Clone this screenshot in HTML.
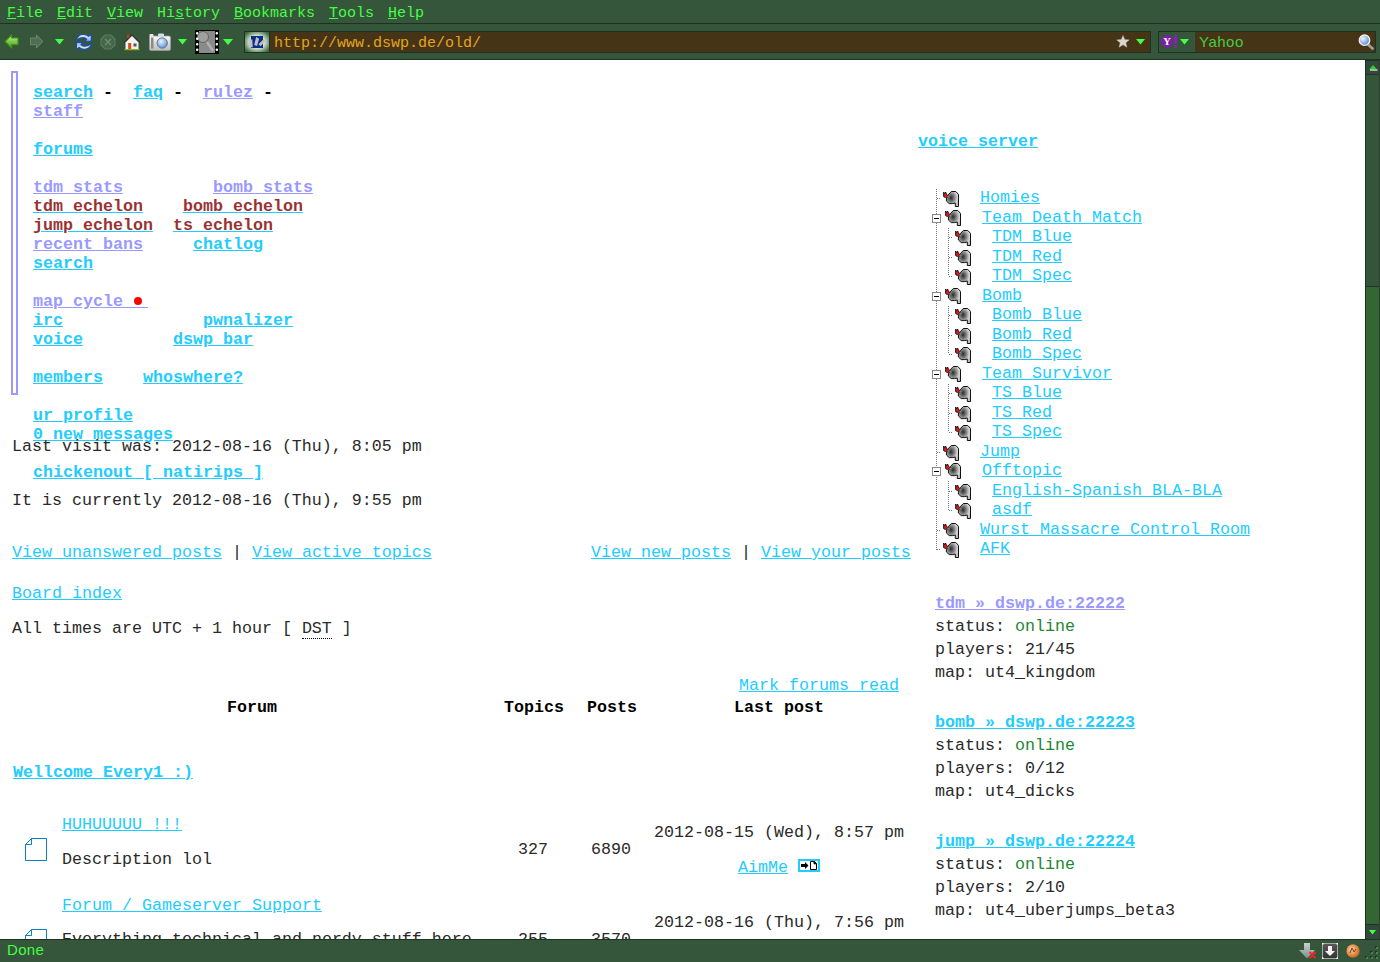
<!DOCTYPE html><html><head><meta charset="utf-8"><style>
*{margin:0;padding:0;box-sizing:border-box}
html,body{width:1380px;height:962px;overflow:hidden;background:#fff;font-family:"Liberation Mono",monospace}
.chrome{position:absolute;left:0;background:#35563a}
.t{position:absolute;white-space:pre;font-size:16.667px;line-height:20px;color:#2a2a2a}
.t.b{color:#000}
.t a{text-decoration:underline}
.b{font-weight:bold}
.menu{position:absolute;top:4px;height:20px;font-size:15px;line-height:20px;color:#44ff44;white-space:pre}
.ab{position:absolute}
</style></head><body>

<div class="chrome" style="top:0;width:1380px;height:60px"></div>
<div class="ab" style="left:0;top:23px;width:1380px;height:1px;background:#1e3221"></div>
<div class="ab" style="left:0;top:59px;width:1380px;height:1px;background:#1e3221"></div>
<div class="menu" style="left:7px">File</div>
<div class="ab" style="left:7px;top:18px;width:9px;height:1px;background:#44ff44"></div>
<div class="menu" style="left:57px">Edit</div>
<div class="ab" style="left:57px;top:18px;width:9px;height:1px;background:#44ff44"></div>
<div class="menu" style="left:107px">View</div>
<div class="ab" style="left:107px;top:18px;width:9px;height:1px;background:#44ff44"></div>
<div class="menu" style="left:157px">History</div>
<div class="ab" style="left:175px;top:18px;width:9px;height:1px;background:#44ff44"></div>
<div class="menu" style="left:234px">Bookmarks</div>
<div class="ab" style="left:234px;top:18px;width:9px;height:1px;background:#44ff44"></div>
<div class="menu" style="left:329px">Tools</div>
<div class="ab" style="left:329px;top:18px;width:9px;height:1px;background:#44ff44"></div>
<div class="menu" style="left:388px">Help</div>
<div class="ab" style="left:388px;top:18px;width:9px;height:1px;background:#44ff44"></div>
<div class="ab" style="left:244px;top:31px;width:907px;height:22px;background:#463417;border:1px solid #1e3221"></div>
<div class="ab" style="left:245px;top:32px;width:24px;height:20px;background:#3e6a44"></div>
<div class="ab" style="left:269px;top:32px;width:1px;height:20px;background:#22342a"></div>
<div class="ab" style="left:274px;top:33px;height:22px;font-size:15px;line-height:22px;color:#e6a41c;white-space:pre">http://www.dswp.de/old/</div>
<div class="ab" style="left:1158px;top:31px;width:218px;height:22px;background:#463417;border:1px solid #1e3221"></div>
<div class="ab" style="left:1159px;top:32px;width:36px;height:20px;background:#35563a"></div>
<div class="ab" style="left:1199px;top:31px;height:22px;font-family:'Liberation Sans',sans-serif;font-size:15px;line-height:22px;color:#44cc44;white-space:pre;letter-spacing:0.5px">Yahoo</div>
<div class="ab" style="left:1365px;top:60px;width:15px;height:880px;background:#1c361e"></div>
<div class="ab" style="left:1366px;top:61px;width:13px;height:878px;background:#336633"></div>
<div class="ab" style="left:1379px;top:60px;width:1px;height:880px;background:#2b3f2c"></div>
<div class="chrome" style="top:939px;width:1380px;height:23px"></div>
<div class="ab" style="left:0;top:939px;width:1380px;height:1px;background:#1e3221"></div>
<div class="ab" style="left:7px;top:938px;height:23px;font-family:'Liberation Sans',sans-serif;font-size:15px;line-height:23px;color:#44ff44;letter-spacing:0.3px">Done</div>
<svg class="ab" style="left:4px;top:34px;" width="16" height="16" viewBox="0 0 16 16"><defs><linearGradient id="gb" x1="0" y1="0" x2="0" y2="1"><stop offset="0" stop-color="#c8f0a0"/><stop offset="1" stop-color="#3c9a10"/></linearGradient></defs><path d="M1.2,7.4 L7.6,1 L7.6,4 L14,4 L14,10.6 L7.6,10.6 L7.6,14 Z" fill="url(#gb)" stroke="#3a9a08" stroke-width="1.2" stroke-linejoin="round"/></svg>
<svg class="ab" style="left:29px;top:34px;" width="16" height="16" viewBox="0 0 16 16"><path d="M13.6,7.4 L7.4,1.2 L7.4,4 L1.5,4 L1.5,10.7 L7.4,10.7 L7.4,13.8 Z" fill="#4f6e52" stroke="#66856a" stroke-width="1.1" stroke-linejoin="round"/></svg>
<svg class="ab" style="left:55px;top:38.7px;" width="9" height="6.4" viewBox="0 0 9 6.4"><path d="M0,0 L9,0 L4.5,5.4 Z" fill="#44ff44"/></svg>
<svg class="ab" style="left:178px;top:38.7px;" width="9" height="6.4" viewBox="0 0 9 6.4"><path d="M0,0 L9,0 L4.5,5.4 Z" fill="#44ff44"/></svg>
<svg class="ab" style="left:223px;top:38.9px;" width="10" height="7" viewBox="0 0 10 7"><path d="M0,0 L10,0 L5.0,6 Z" fill="#44ff44"/></svg>
<svg class="ab" style="left:1136px;top:38.9px;" width="9" height="6.4" viewBox="0 0 9 6.4"><path d="M0,0 L9,0 L4.5,5.4 Z" fill="#44ff44"/></svg>
<svg class="ab" style="left:1180px;top:38.9px;" width="9" height="6.4" viewBox="0 0 9 6.4"><path d="M0,0 L9,0 L4.5,5.4 Z" fill="#44ff44"/></svg>
<svg class="ab" style="left:74px;top:32px;" width="20" height="20" viewBox="0 0 20 20"><defs><linearGradient id="gr" x1="0" y1="0" x2="0" y2="1"><stop offset="0" stop-color="#eef4ff"/><stop offset="1" stop-color="#88ace0"/></linearGradient></defs><path d="M2.4,8.6 C3,3.8 6.5,2.3 9.5,2.3 C11.8,2.3 13.3,3 14.6,4.2 L17.3,2.4 L17.3,9.4 L10.6,9.4 L12.6,7.3 C11.6,6.3 10.6,5.6 9,5.6 C6.6,5.6 4.6,6.6 2.4,8.6 Z" fill="url(#gr)" stroke="#1f4f9f" stroke-width="1.3" stroke-linejoin="miter"/><g transform="rotate(180 9.85 9.9)"><path d="M2.4,8.6 C3,3.8 6.5,2.3 9.5,2.3 C11.8,2.3 13.3,3 14.6,4.2 L17.3,2.4 L17.3,9.4 L10.6,9.4 L12.6,7.3 C11.6,6.3 10.6,5.6 9,5.6 C6.6,5.6 4.6,6.6 2.4,8.6 Z" fill="url(#gr)" stroke="#1f4f9f" stroke-width="1.3" stroke-linejoin="miter"/></g></svg>
<svg class="ab" style="left:100px;top:34px;" width="16" height="16" viewBox="0 0 16 16"><path d="M5,1 L11,1 L15,5 L15,11 L11,15 L5,15 L1,11 L1,5 Z" fill="#456648" stroke="#5c7d60" stroke-width="1.1"/><path d="M5,5 L11,11 M11,5 L5,11" stroke="#6e8f72" stroke-width="1.4"/></svg>
<svg class="ab" style="left:123px;top:33px;" width="18" height="18" viewBox="0 0 18 18"><rect x="2.5" y="9" width="13" height="7" fill="#f2f2f0"/><path d="M1,10 L9,2 L17,10" fill="#f2f2f0" stroke="#333" stroke-width="1.3"/><rect x="4" y="1.8" width="2.2" height="3" fill="#d03a10"/><rect x="5.2" y="10" width="3" height="6" fill="#d84a10"/><rect x="10.5" y="10.5" width="3" height="3" fill="#555"/><rect x="1.5" y="16" width="15" height="1.2" fill="#8ab820"/></svg>
<svg class="ab" style="left:148px;top:32px;" width="24" height="20" viewBox="0 0 24 20"><defs><linearGradient id="gc" x1="0" y1="0" x2="0" y2="1"><stop offset="0" stop-color="#fafafa"/><stop offset="1" stop-color="#bdbdbd"/></linearGradient><radialGradient id="gl" cx="0.4" cy="0.35" r="0.7"><stop offset="0" stop-color="#e8f4ff"/><stop offset="1" stop-color="#4f8fd8"/></radialGradient></defs><rect x="1.5" y="4" width="21" height="14.5" rx="1.5" fill="url(#gc)" stroke="#9a9a9a" stroke-width="0.8"/><rect x="1.5" y="2" width="4" height="3" rx="1" fill="#e8e8e8"/><rect x="10" y="1.5" width="6" height="3" rx="1" fill="#cfe0f0"/><rect x="3" y="5.5" width="2.5" height="11" fill="#8a8a8a"/><circle cx="14.2" cy="11" r="5.2" fill="url(#gl)" stroke="#6f6f6f" stroke-width="0.9"/></svg>
<svg class="ab" style="left:195px;top:30px;" width="24" height="24" viewBox="0 0 24 24"><rect x="0" y="0" width="24" height="24" fill="#000"/><rect x="4" y="1" width="16" height="22" fill="#8a8a8a"/><circle cx="8" cy="7" r="5.5" fill="#a0a0a0" stroke="#666" stroke-width="1"/><path d="M12,12 L18,21" stroke="#b0b0b0" stroke-width="2.5"/><rect x="1" y="2" width="2.4" height="2.6" rx="1" fill="#fff"/><rect x="20.6" y="2" width="2.4" height="2.6" rx="1" fill="#fff"/><rect x="1" y="7.5" width="2.4" height="2.6" rx="1" fill="#fff"/><rect x="20.6" y="7.5" width="2.4" height="2.6" rx="1" fill="#fff"/><rect x="1" y="13" width="2.4" height="2.6" rx="1" fill="#fff"/><rect x="20.6" y="13" width="2.4" height="2.6" rx="1" fill="#fff"/><rect x="1" y="18.5" width="2.4" height="2.6" rx="1" fill="#fff"/><rect x="20.6" y="18.5" width="2.4" height="2.6" rx="1" fill="#fff"/></svg>
<svg class="ab" style="left:245px;top:32px;" width="24" height="20" viewBox="0 0 24 20"><defs><radialGradient id="gf" cx="0.5" cy="0.5" r="0.62"><stop offset="0.5" stop-color="#d8e4d0"/><stop offset="1" stop-color="#3e6a44"/></radialGradient></defs><rect x="0" y="0" width="24" height="20" fill="url(#gf)"/><rect x="6" y="4" width="12" height="12" fill="#0a2f8a"/><path d="M4,7.5 L7.3,7.5 L7.8,15.2 L4.5,15.2 Z" fill="#c0c0c0"/><path d="M11.2,5 L14.2,6.8 L12,13.9 L9.2,13 Z" fill="#c0c0c0"/><path d="M18.5,7.2 L20.5,9.2 L15.5,14.2 L13.5,12.2 Z" fill="#c0c0c0"/></svg>
<svg class="ab" style="left:1116px;top:35px;" width="14" height="13" viewBox="0 0 14 13"><path d="M7,0.5 L8.7,4.6 L13.2,4.9 L9.8,7.8 L10.9,12.2 L7,9.8 L3.1,12.2 L4.2,7.8 L0.8,4.9 L5.3,4.6 Z" fill="#dcd7cf" stroke="#bfb8ad" stroke-width="0.5"/></svg>
<svg class="ab" style="left:1160px;top:34px;" width="20" height="15" viewBox="0 0 20 15"><circle cx="7" cy="7.3" r="6.3" fill="#7b1fa2"/><text x="7" y="11.3" font-family="Liberation Serif" font-weight="bold" font-size="10.5" fill="#fff" text-anchor="middle">Y</text><rect x="14.3" y="1" width="2.6" height="8.5" fill="#8a22c0"/><rect x="14.3" y="11" width="2.6" height="2.6" fill="#8a22c0"/></svg>
<svg class="ab" style="left:1357px;top:33px;" width="18" height="18" viewBox="0 0 18 18"><defs><radialGradient id="gm" cx="0.35" cy="0.35" r="0.7"><stop offset="0" stop-color="#f0f6ff"/><stop offset="1" stop-color="#4f86d0"/></radialGradient></defs><path d="M10.5,11 L15.5,15.5" stroke="#9aa0a0" stroke-width="2.8" stroke-linecap="round"/><circle cx="7.5" cy="7.2" r="5.2" fill="url(#gm)" stroke="#f4f0ea" stroke-width="1.4"/></svg>
<div class="ab" style="left:1366px;top:61px;width:13px;height:13px;background:#32483a"></div>
<div class="ab" style="left:1366px;top:74px;width:13px;height:1px;background:#22352a"></div>
<div class="ab" style="left:1366px;top:75px;width:13px;height:211px;background:#35553a"></div>
<div class="ab" style="left:1366px;top:286px;width:13px;height:1px;background:#22352a"></div>
<svg class="ab" style="left:1369px;top:64.5px;" width="9" height="6" viewBox="0 0 9 6"><path d="M0,4.5 L8,4.5 L4,0 Z" fill="#33cc33"/><rect x="1" y="4.5" width="7.5" height="1.1" fill="#f0fff0"/></svg>
<div class="ab" style="left:1366px;top:924px;width:13px;height:1px;background:#1e3221"></div>
<div class="ab" style="left:1366px;top:925px;width:13px;height:14px;background:#32483a"></div>
<svg class="ab" style="left:1369px;top:929.5px;" width="8" height="5" viewBox="0 0 8 5"><path d="M0,0 L7,0 L3.5,4.5 Z" fill="#44ff44"/></svg>
<svg class="ab" style="left:1299px;top:942px;" width="18" height="18" viewBox="0 0 18 18"><defs><linearGradient id="gd" x1="0" y1="0" x2="0" y2="1"><stop offset="0" stop-color="#c8d0cc"/><stop offset="1" stop-color="#7a8f88"/></linearGradient></defs><path d="M5,1 L11,1 L11,8 L16,8 L8,16.5 L0,8 L5,8 Z" fill="url(#gd)"/><path d="M11,10.5 L16,15.5 M16,10.5 L11,15.5" stroke="#ff2020" stroke-width="1.8" stroke-linecap="round"/></svg>
<svg class="ab" style="left:1322px;top:943px;" width="16" height="16" viewBox="0 0 16 16"><defs><linearGradient id="gdb" x1="0" y1="0" x2="0" y2="1"><stop offset="0" stop-color="#5a5a5a"/><stop offset="1" stop-color="#333"/></linearGradient></defs><rect x="0.5" y="0.5" width="15" height="15" fill="url(#gdb)" stroke="#a8a8a8" stroke-width="1"/><rect x="0" y="0" width="1.5" height="1.5" fill="#fff"/><rect x="14.5" y="0" width="1.5" height="1.5" fill="#fff"/><rect x="0" y="14.5" width="1.5" height="1.5" fill="#fff"/><rect x="14.5" y="14.5" width="1.5" height="1.5" fill="#fff"/><path d="M6,3 L10,3 L10,8 L13,8 L8,13 L3,8 L6,8 Z" fill="#f4f4f4"/></svg>
<svg class="ab" style="left:1345px;top:943px;" width="16" height="16" viewBox="0 0 16 16"><defs><radialGradient id="gg" cx="0.4" cy="0.4" r="0.6"><stop offset="0" stop-color="#f8d8a0"/><stop offset="1" stop-color="#c86a20"/></radialGradient></defs><circle cx="8" cy="8" r="6.7" fill="url(#gg)"/><path d="M5,10 L7,5 L9,9 L11,6" stroke="#9a2a20" stroke-width="1" fill="none"/></svg>
<div class="ab" style="left:1375px;top:946px;width:2px;height:2px;background:#1e3221"></div><div class="ab" style="left:1376px;top:947px;width:2px;height:2px;background:#3f8a45"></div>
<div class="ab" style="left:1370px;top:951px;width:2px;height:2px;background:#1e3221"></div><div class="ab" style="left:1371px;top:952px;width:2px;height:2px;background:#3f8a45"></div>
<div class="ab" style="left:1375px;top:951px;width:2px;height:2px;background:#1e3221"></div><div class="ab" style="left:1376px;top:952px;width:2px;height:2px;background:#3f8a45"></div>
<div class="ab" style="left:1365px;top:956px;width:2px;height:2px;background:#1e3221"></div><div class="ab" style="left:1366px;top:957px;width:2px;height:2px;background:#3f8a45"></div>
<div class="ab" style="left:1370px;top:956px;width:2px;height:2px;background:#1e3221"></div><div class="ab" style="left:1371px;top:957px;width:2px;height:2px;background:#3f8a45"></div>
<div class="ab" style="left:1375px;top:956px;width:2px;height:2px;background:#1e3221"></div><div class="ab" style="left:1376px;top:957px;width:2px;height:2px;background:#3f8a45"></div>
<div id="content" style="position:absolute;left:0;top:60px;width:1365px;height:879px;overflow:hidden">
<div class="ab" style="left:11px;top:11px;width:7px;height:324px;border:2px solid #9999ff"></div>
<div class="t b" style="left:33px;top:23.0px;"><a style="color:#22ccff;">search</a> -  <a style="color:#22ccff;">faq</a> -  <a style="color:#9999ff;">rulez</a> -</div>
<div class="t b" style="left:33px;top:42.0px;"><a style="color:#9999ff;">staff</a></div>
<div class="t b" style="left:33px;top:80.0px;"><a style="color:#22ccff;">forums</a></div>
<div class="t b" style="left:33px;top:118.0px;"><a style="color:#9999ff;">tdm stats</a>         <a style="color:#9999ff;">bomb stats</a></div>
<div class="t b" style="left:33px;top:137.0px;"><a style="color:#22ccff;"><span style="color:#993333">tdm echelon</span></a>    <a style="color:#22ccff;"><span style="color:#993333">bomb echelon</span></a></div>
<div class="t b" style="left:33px;top:156.0px;"><a style="color:#22ccff;"><span style="color:#993333">jump echelon</span></a>  <a style="color:#22ccff;"><span style="color:#993333">ts echelon</span></a></div>
<div class="t b" style="left:33px;top:175.0px;"><a style="color:#9999ff;">recent bans</a>     <a style="color:#22ccff;">chatlog</a></div>
<div class="t b" style="left:33px;top:194.0px;"><a style="color:#22ccff;">search</a></div>
<div class="t b" style="left:33px;top:232.0px;"><a style="color:#9999ff;">map cycle <span style="letter-spacing:5px;position:relative"> <b style="position:absolute;left:1px;top:5px;width:8px;height:8px;border-radius:50%;background:#f00"></b></span></a></div>
<div class="t b" style="left:33px;top:251.0px;"><a style="color:#22ccff;">irc</a>              <a style="color:#22ccff;">pwnalizer</a></div>
<div class="t b" style="left:33px;top:270.0px;"><a style="color:#22ccff;">voice</a>         <a style="color:#22ccff;">dswp bar</a></div>
<div class="t b" style="left:33px;top:308.0px;"><a style="color:#22ccff;">members</a>    <a style="color:#22ccff;">whoswhere?</a></div>
<div class="t b" style="left:33px;top:346.0px;"><a style="color:#22ccff;">ur profile</a></div>
<div class="t b" style="left:33px;top:365.0px;"><a style="color:#22ccff;">0 new messages</a></div>
<div class="t" style="left:12px;top:377.0px;">Last visit was: 2012-08-16 (Thu), 8:05 pm</div>
<div class="t b" style="left:33px;top:403.0px;"><a style="color:#22ccff;">chickenout [ natirips ]</a></div>
<div class="t" style="left:12px;top:431.0px;">It is currently 2012-08-16 (Thu), 9:55 pm</div>
<div class="t" style="left:12px;top:483.0px;"><a style="color:#22ccff;">View unanswered posts</a> | <a style="color:#22ccff;">View active topics</a></div>
<div class="t" style="left:591px;top:483.0px;"><a style="color:#22ccff;">View new posts</a> | <a style="color:#22ccff;">View your posts</a></div>
<div class="t" style="left:12px;top:524.0px;"><a style="color:#22ccff;">Board index</a></div>
<div class="t" style="left:12px;top:559.0px;">All times are UTC + 1 hour [ <span style="border-bottom:1px dotted #000">DST</span> ]</div>
<div class="t" style="left:739px;top:616.0px;"><a style="color:#22ccff;">Mark forums read</a></div>
<div class="t b" style="left:227px;top:638.0px;">Forum</div>
<div class="t b" style="left:504px;top:638.0px;">Topics</div>
<div class="t b" style="left:587px;top:638.0px;">Posts</div>
<div class="t b" style="left:734px;top:638.0px;">Last post</div>
<div class="t b" style="left:13px;top:703.0px;"><a style="color:#22ccff;">Wellcome Every1 :)</a></div>
<div class="t" style="left:62px;top:755.0px;"><a style="color:#22ccff;">HUHUUUUU !!!</a></div>
<div class="t" style="left:62px;top:790.0px;">Description lol</div>
<div class="t" style="left:518px;top:780.0px;">327</div>
<div class="t" style="left:591px;top:780.0px;">6890</div>
<div class="t" style="left:654px;top:763.0px;">2012-08-15 (Wed), 8:57 pm</div>
<div class="t" style="left:738px;top:798.0px;"><a style="color:#22ccff;">AimMe</a></div>
<div class="t" style="left:62px;top:836.0px;"><a style="color:#22ccff;">Forum / Gameserver Support</a></div>
<div class="t" style="left:62px;top:870.0px;">Everything technical and nerdy stuff here</div>
<div class="t" style="left:518px;top:870.0px;">255</div>
<div class="t" style="left:591px;top:870.0px;">3570</div>
<div class="t" style="left:654px;top:853.0px;">2012-08-16 (Thu), 7:56 pm</div>
<svg class="ab" style="left:25px;top:778px" width="23" height="23" viewBox="0 0 23 23"><path d="M6.5,0.5 L21.5,0.5 L21.5,22.5 L0.5,22.5 L0.5,6.5 Z M0.5,6.5 L6.5,6.5 L6.5,0.5" fill="none" stroke="#0a80c0" stroke-width="1"/></svg>
<svg class="ab" style="left:25px;top:869px" width="23" height="23" viewBox="0 0 23 23"><path d="M6.5,0.5 L21.5,0.5 L21.5,22.5 L0.5,22.5 L0.5,6.5 Z M0.5,6.5 L6.5,6.5 L6.5,0.5" fill="none" stroke="#0a80c0" stroke-width="1"/></svg>
<svg class="ab" style="left:798px;top:799px" width="22" height="13" viewBox="0 0 22 13"><rect x="1" y="1" width="20" height="11" fill="#fff" stroke="#22ccff" stroke-width="2"/><path d="M3,5 L7,5 L7,3 L10.5,6.5 L7,10 L7,8 L3,8 Z" fill="#000"/><path d="M12.5,2.5 L16.5,2.5 L18.5,4.5 L18.5,10.5 L12.5,10.5 Z" fill="#fff" stroke="#000" stroke-width="1"/><path d="M16,2.5 L16,4.8 L18.5,4.8" fill="#000" stroke="#000" stroke-width="1"/></svg>
<div class="t b" style="left:918px;top:72.0px;"><a style="color:#22ccff;">voice server</a></div>
<div class="t" style="left:980px;top:128.0px;"><a style="color:#22ccff;">Homies</a></div>
<div class="t" style="left:982px;top:148.0px;"><a style="color:#22ccff;">Team Death Match</a></div>
<div class="t" style="left:992px;top:167.0px;"><a style="color:#22ccff;">TDM Blue</a></div>
<div class="t" style="left:992px;top:187.0px;"><a style="color:#22ccff;">TDM Red</a></div>
<div class="t" style="left:992px;top:206.0px;"><a style="color:#22ccff;">TDM Spec</a></div>
<div class="t" style="left:982px;top:226.0px;"><a style="color:#22ccff;">Bomb</a></div>
<div class="t" style="left:992px;top:245.0px;"><a style="color:#22ccff;">Bomb Blue</a></div>
<div class="t" style="left:992px;top:265.0px;"><a style="color:#22ccff;">Bomb Red</a></div>
<div class="t" style="left:992px;top:284.0px;"><a style="color:#22ccff;">Bomb Spec</a></div>
<div class="t" style="left:982px;top:304.0px;"><a style="color:#22ccff;">Team Survivor</a></div>
<div class="t" style="left:992px;top:323.0px;"><a style="color:#22ccff;">TS Blue</a></div>
<div class="t" style="left:992px;top:343.0px;"><a style="color:#22ccff;">TS Red</a></div>
<div class="t" style="left:992px;top:362.0px;"><a style="color:#22ccff;">TS Spec</a></div>
<div class="t" style="left:980px;top:382.0px;"><a style="color:#22ccff;">Jump</a></div>
<div class="t" style="left:982px;top:401.0px;"><a style="color:#22ccff;">Offtopic</a></div>
<div class="t" style="left:992px;top:421.0px;"><a style="color:#22ccff;">English-Spanish BLA-BLA</a></div>
<div class="t" style="left:992px;top:440.0px;"><a style="color:#22ccff;">asdf</a></div>
<div class="t" style="left:980px;top:460.0px;"><a style="color:#22ccff;">Wurst Massacre Control Room</a></div>
<div class="t" style="left:980px;top:479.0px;"><a style="color:#22ccff;">AFK</a></div>
<svg width="0" height="0" style="position:absolute"><defs><radialGradient id="gs" cx="0.38" cy="0.42" r="0.62"><stop offset="0" stop-color="#2a2a2a"/><stop offset="0.5" stop-color="#8c8c8c"/><stop offset="0.85" stop-color="#d8d8d8"/><stop offset="1" stop-color="#bdbdbd"/></radialGradient></defs></svg>
<div class="ab" style="left:936px;top:129px;width:1px;height:361px;background:repeating-linear-gradient(to bottom,#777 0,#777 1px,transparent 1px,transparent 2px)"></div>
<div class="ab" style="left:937px;top:138px;width:4px;height:1px;background:repeating-linear-gradient(to right,#777 0,#777 1px,transparent 1px,transparent 2px)"></div>
<svg class="ab" style="left:943px;top:131px" width="16" height="16" viewBox="0 0 16 16"><path d="M8.3,0.5 L12.8,0.5 L15.5,3.4 L15.5,15.5 L12.3,15.5 L12.3,12 L9.8,12.6 L6.2,12.6 L3.4,10 L3.4,8 L5,3.9 Z" fill="url(#gs)" stroke="#111" stroke-width="1"/><path d="M0.6,1 L1.6,2.6 L2.6,1 L3.4,3 L4.8,4.8 L3.6,6.2 L2.4,6.6 L0.6,5.6 Z" fill="#ee1111" stroke="#111" stroke-width="0.9"/><path d="M4.2,5.2 L6.5,6" stroke="#8a8a8a" stroke-width="1"/></svg>
<div class="ab" style="left:932px;top:154px;width:9px;height:9px;border:1px solid #888;background:#fff"></div>
<div class="ab" style="left:934px;top:158px;width:5px;height:1px;background:#000"></div>
<svg class="ab" style="left:945px;top:150px" width="16" height="16" viewBox="0 0 16 16"><path d="M8.3,0.5 L12.8,0.5 L15.5,3.4 L15.5,15.5 L12.3,15.5 L12.3,12 L9.8,12.6 L6.2,12.6 L3.4,10 L3.4,8 L5,3.9 Z" fill="url(#gs)" stroke="#111" stroke-width="1"/><path d="M0.6,1 L1.6,2.6 L2.6,1 L3.4,3 L4.8,4.8 L3.6,6.2 L2.4,6.6 L0.6,5.6 Z" fill="#ee1111" stroke="#111" stroke-width="0.9"/><path d="M4.2,5.2 L6.5,6" stroke="#8a8a8a" stroke-width="1"/></svg>
<div class="ab" style="left:949px;top:177px;width:4px;height:1px;background:repeating-linear-gradient(to right,#777 0,#777 1px,transparent 1px,transparent 2px)"></div>
<svg class="ab" style="left:955px;top:170px" width="16" height="16" viewBox="0 0 16 16"><path d="M8.3,0.5 L12.8,0.5 L15.5,3.4 L15.5,15.5 L12.3,15.5 L12.3,12 L9.8,12.6 L6.2,12.6 L3.4,10 L3.4,8 L5,3.9 Z" fill="url(#gs)" stroke="#111" stroke-width="1"/><path d="M0.6,1 L1.6,2.6 L2.6,1 L3.4,3 L4.8,4.8 L3.6,6.2 L2.4,6.6 L0.6,5.6 Z" fill="#ee1111" stroke="#111" stroke-width="0.9"/><path d="M4.2,5.2 L6.5,6" stroke="#8a8a8a" stroke-width="1"/></svg>
<div class="ab" style="left:949px;top:197px;width:4px;height:1px;background:repeating-linear-gradient(to right,#777 0,#777 1px,transparent 1px,transparent 2px)"></div>
<svg class="ab" style="left:955px;top:190px" width="16" height="16" viewBox="0 0 16 16"><path d="M8.3,0.5 L12.8,0.5 L15.5,3.4 L15.5,15.5 L12.3,15.5 L12.3,12 L9.8,12.6 L6.2,12.6 L3.4,10 L3.4,8 L5,3.9 Z" fill="url(#gs)" stroke="#111" stroke-width="1"/><path d="M0.6,1 L1.6,2.6 L2.6,1 L3.4,3 L4.8,4.8 L3.6,6.2 L2.4,6.6 L0.6,5.6 Z" fill="#ee1111" stroke="#111" stroke-width="0.9"/><path d="M4.2,5.2 L6.5,6" stroke="#8a8a8a" stroke-width="1"/></svg>
<div class="ab" style="left:949px;top:216px;width:4px;height:1px;background:repeating-linear-gradient(to right,#777 0,#777 1px,transparent 1px,transparent 2px)"></div>
<svg class="ab" style="left:955px;top:209px" width="16" height="16" viewBox="0 0 16 16"><path d="M8.3,0.5 L12.8,0.5 L15.5,3.4 L15.5,15.5 L12.3,15.5 L12.3,12 L9.8,12.6 L6.2,12.6 L3.4,10 L3.4,8 L5,3.9 Z" fill="url(#gs)" stroke="#111" stroke-width="1"/><path d="M0.6,1 L1.6,2.6 L2.6,1 L3.4,3 L4.8,4.8 L3.6,6.2 L2.4,6.6 L0.6,5.6 Z" fill="#ee1111" stroke="#111" stroke-width="0.9"/><path d="M4.2,5.2 L6.5,6" stroke="#8a8a8a" stroke-width="1"/></svg>
<div class="ab" style="left:932px;top:232px;width:9px;height:9px;border:1px solid #888;background:#fff"></div>
<div class="ab" style="left:934px;top:236px;width:5px;height:1px;background:#000"></div>
<svg class="ab" style="left:945px;top:228px" width="16" height="16" viewBox="0 0 16 16"><path d="M8.3,0.5 L12.8,0.5 L15.5,3.4 L15.5,15.5 L12.3,15.5 L12.3,12 L9.8,12.6 L6.2,12.6 L3.4,10 L3.4,8 L5,3.9 Z" fill="url(#gs)" stroke="#111" stroke-width="1"/><path d="M0.6,1 L1.6,2.6 L2.6,1 L3.4,3 L4.8,4.8 L3.6,6.2 L2.4,6.6 L0.6,5.6 Z" fill="#ee1111" stroke="#111" stroke-width="0.9"/><path d="M4.2,5.2 L6.5,6" stroke="#8a8a8a" stroke-width="1"/></svg>
<div class="ab" style="left:949px;top:255px;width:4px;height:1px;background:repeating-linear-gradient(to right,#777 0,#777 1px,transparent 1px,transparent 2px)"></div>
<svg class="ab" style="left:955px;top:248px" width="16" height="16" viewBox="0 0 16 16"><path d="M8.3,0.5 L12.8,0.5 L15.5,3.4 L15.5,15.5 L12.3,15.5 L12.3,12 L9.8,12.6 L6.2,12.6 L3.4,10 L3.4,8 L5,3.9 Z" fill="url(#gs)" stroke="#111" stroke-width="1"/><path d="M0.6,1 L1.6,2.6 L2.6,1 L3.4,3 L4.8,4.8 L3.6,6.2 L2.4,6.6 L0.6,5.6 Z" fill="#ee1111" stroke="#111" stroke-width="0.9"/><path d="M4.2,5.2 L6.5,6" stroke="#8a8a8a" stroke-width="1"/></svg>
<div class="ab" style="left:949px;top:275px;width:4px;height:1px;background:repeating-linear-gradient(to right,#777 0,#777 1px,transparent 1px,transparent 2px)"></div>
<svg class="ab" style="left:955px;top:268px" width="16" height="16" viewBox="0 0 16 16"><path d="M8.3,0.5 L12.8,0.5 L15.5,3.4 L15.5,15.5 L12.3,15.5 L12.3,12 L9.8,12.6 L6.2,12.6 L3.4,10 L3.4,8 L5,3.9 Z" fill="url(#gs)" stroke="#111" stroke-width="1"/><path d="M0.6,1 L1.6,2.6 L2.6,1 L3.4,3 L4.8,4.8 L3.6,6.2 L2.4,6.6 L0.6,5.6 Z" fill="#ee1111" stroke="#111" stroke-width="0.9"/><path d="M4.2,5.2 L6.5,6" stroke="#8a8a8a" stroke-width="1"/></svg>
<div class="ab" style="left:949px;top:294px;width:4px;height:1px;background:repeating-linear-gradient(to right,#777 0,#777 1px,transparent 1px,transparent 2px)"></div>
<svg class="ab" style="left:955px;top:287px" width="16" height="16" viewBox="0 0 16 16"><path d="M8.3,0.5 L12.8,0.5 L15.5,3.4 L15.5,15.5 L12.3,15.5 L12.3,12 L9.8,12.6 L6.2,12.6 L3.4,10 L3.4,8 L5,3.9 Z" fill="url(#gs)" stroke="#111" stroke-width="1"/><path d="M0.6,1 L1.6,2.6 L2.6,1 L3.4,3 L4.8,4.8 L3.6,6.2 L2.4,6.6 L0.6,5.6 Z" fill="#ee1111" stroke="#111" stroke-width="0.9"/><path d="M4.2,5.2 L6.5,6" stroke="#8a8a8a" stroke-width="1"/></svg>
<div class="ab" style="left:932px;top:310px;width:9px;height:9px;border:1px solid #888;background:#fff"></div>
<div class="ab" style="left:934px;top:314px;width:5px;height:1px;background:#000"></div>
<svg class="ab" style="left:945px;top:306px" width="16" height="16" viewBox="0 0 16 16"><path d="M8.3,0.5 L12.8,0.5 L15.5,3.4 L15.5,15.5 L12.3,15.5 L12.3,12 L9.8,12.6 L6.2,12.6 L3.4,10 L3.4,8 L5,3.9 Z" fill="url(#gs)" stroke="#111" stroke-width="1"/><path d="M0.6,1 L1.6,2.6 L2.6,1 L3.4,3 L4.8,4.8 L3.6,6.2 L2.4,6.6 L0.6,5.6 Z" fill="#ee1111" stroke="#111" stroke-width="0.9"/><path d="M4.2,5.2 L6.5,6" stroke="#8a8a8a" stroke-width="1"/></svg>
<div class="ab" style="left:949px;top:333px;width:4px;height:1px;background:repeating-linear-gradient(to right,#777 0,#777 1px,transparent 1px,transparent 2px)"></div>
<svg class="ab" style="left:955px;top:326px" width="16" height="16" viewBox="0 0 16 16"><path d="M8.3,0.5 L12.8,0.5 L15.5,3.4 L15.5,15.5 L12.3,15.5 L12.3,12 L9.8,12.6 L6.2,12.6 L3.4,10 L3.4,8 L5,3.9 Z" fill="url(#gs)" stroke="#111" stroke-width="1"/><path d="M0.6,1 L1.6,2.6 L2.6,1 L3.4,3 L4.8,4.8 L3.6,6.2 L2.4,6.6 L0.6,5.6 Z" fill="#ee1111" stroke="#111" stroke-width="0.9"/><path d="M4.2,5.2 L6.5,6" stroke="#8a8a8a" stroke-width="1"/></svg>
<div class="ab" style="left:949px;top:353px;width:4px;height:1px;background:repeating-linear-gradient(to right,#777 0,#777 1px,transparent 1px,transparent 2px)"></div>
<svg class="ab" style="left:955px;top:346px" width="16" height="16" viewBox="0 0 16 16"><path d="M8.3,0.5 L12.8,0.5 L15.5,3.4 L15.5,15.5 L12.3,15.5 L12.3,12 L9.8,12.6 L6.2,12.6 L3.4,10 L3.4,8 L5,3.9 Z" fill="url(#gs)" stroke="#111" stroke-width="1"/><path d="M0.6,1 L1.6,2.6 L2.6,1 L3.4,3 L4.8,4.8 L3.6,6.2 L2.4,6.6 L0.6,5.6 Z" fill="#ee1111" stroke="#111" stroke-width="0.9"/><path d="M4.2,5.2 L6.5,6" stroke="#8a8a8a" stroke-width="1"/></svg>
<div class="ab" style="left:949px;top:372px;width:4px;height:1px;background:repeating-linear-gradient(to right,#777 0,#777 1px,transparent 1px,transparent 2px)"></div>
<svg class="ab" style="left:955px;top:365px" width="16" height="16" viewBox="0 0 16 16"><path d="M8.3,0.5 L12.8,0.5 L15.5,3.4 L15.5,15.5 L12.3,15.5 L12.3,12 L9.8,12.6 L6.2,12.6 L3.4,10 L3.4,8 L5,3.9 Z" fill="url(#gs)" stroke="#111" stroke-width="1"/><path d="M0.6,1 L1.6,2.6 L2.6,1 L3.4,3 L4.8,4.8 L3.6,6.2 L2.4,6.6 L0.6,5.6 Z" fill="#ee1111" stroke="#111" stroke-width="0.9"/><path d="M4.2,5.2 L6.5,6" stroke="#8a8a8a" stroke-width="1"/></svg>
<div class="ab" style="left:937px;top:392px;width:4px;height:1px;background:repeating-linear-gradient(to right,#777 0,#777 1px,transparent 1px,transparent 2px)"></div>
<svg class="ab" style="left:943px;top:385px" width="16" height="16" viewBox="0 0 16 16"><path d="M8.3,0.5 L12.8,0.5 L15.5,3.4 L15.5,15.5 L12.3,15.5 L12.3,12 L9.8,12.6 L6.2,12.6 L3.4,10 L3.4,8 L5,3.9 Z" fill="url(#gs)" stroke="#111" stroke-width="1"/><path d="M0.6,1 L1.6,2.6 L2.6,1 L3.4,3 L4.8,4.8 L3.6,6.2 L2.4,6.6 L0.6,5.6 Z" fill="#ee1111" stroke="#111" stroke-width="0.9"/><path d="M4.2,5.2 L6.5,6" stroke="#8a8a8a" stroke-width="1"/></svg>
<div class="ab" style="left:932px;top:407px;width:9px;height:9px;border:1px solid #888;background:#fff"></div>
<div class="ab" style="left:934px;top:411px;width:5px;height:1px;background:#000"></div>
<svg class="ab" style="left:945px;top:403px" width="16" height="16" viewBox="0 0 16 16"><path d="M8.3,0.5 L12.8,0.5 L15.5,3.4 L15.5,15.5 L12.3,15.5 L12.3,12 L9.8,12.6 L6.2,12.6 L3.4,10 L3.4,8 L5,3.9 Z" fill="url(#gs)" stroke="#111" stroke-width="1"/><path d="M0.6,1 L1.6,2.6 L2.6,1 L3.4,3 L4.8,4.8 L3.6,6.2 L2.4,6.6 L0.6,5.6 Z" fill="#ee1111" stroke="#111" stroke-width="0.9"/><path d="M4.2,5.2 L6.5,6" stroke="#8a8a8a" stroke-width="1"/></svg>
<div class="ab" style="left:949px;top:431px;width:4px;height:1px;background:repeating-linear-gradient(to right,#777 0,#777 1px,transparent 1px,transparent 2px)"></div>
<svg class="ab" style="left:955px;top:424px" width="16" height="16" viewBox="0 0 16 16"><path d="M8.3,0.5 L12.8,0.5 L15.5,3.4 L15.5,15.5 L12.3,15.5 L12.3,12 L9.8,12.6 L6.2,12.6 L3.4,10 L3.4,8 L5,3.9 Z" fill="url(#gs)" stroke="#111" stroke-width="1"/><path d="M0.6,1 L1.6,2.6 L2.6,1 L3.4,3 L4.8,4.8 L3.6,6.2 L2.4,6.6 L0.6,5.6 Z" fill="#ee1111" stroke="#111" stroke-width="0.9"/><path d="M4.2,5.2 L6.5,6" stroke="#8a8a8a" stroke-width="1"/></svg>
<div class="ab" style="left:949px;top:450px;width:4px;height:1px;background:repeating-linear-gradient(to right,#777 0,#777 1px,transparent 1px,transparent 2px)"></div>
<svg class="ab" style="left:955px;top:443px" width="16" height="16" viewBox="0 0 16 16"><path d="M8.3,0.5 L12.8,0.5 L15.5,3.4 L15.5,15.5 L12.3,15.5 L12.3,12 L9.8,12.6 L6.2,12.6 L3.4,10 L3.4,8 L5,3.9 Z" fill="url(#gs)" stroke="#111" stroke-width="1"/><path d="M0.6,1 L1.6,2.6 L2.6,1 L3.4,3 L4.8,4.8 L3.6,6.2 L2.4,6.6 L0.6,5.6 Z" fill="#ee1111" stroke="#111" stroke-width="0.9"/><path d="M4.2,5.2 L6.5,6" stroke="#8a8a8a" stroke-width="1"/></svg>
<div class="ab" style="left:937px;top:470px;width:4px;height:1px;background:repeating-linear-gradient(to right,#777 0,#777 1px,transparent 1px,transparent 2px)"></div>
<svg class="ab" style="left:943px;top:463px" width="16" height="16" viewBox="0 0 16 16"><path d="M8.3,0.5 L12.8,0.5 L15.5,3.4 L15.5,15.5 L12.3,15.5 L12.3,12 L9.8,12.6 L6.2,12.6 L3.4,10 L3.4,8 L5,3.9 Z" fill="url(#gs)" stroke="#111" stroke-width="1"/><path d="M0.6,1 L1.6,2.6 L2.6,1 L3.4,3 L4.8,4.8 L3.6,6.2 L2.4,6.6 L0.6,5.6 Z" fill="#ee1111" stroke="#111" stroke-width="0.9"/><path d="M4.2,5.2 L6.5,6" stroke="#8a8a8a" stroke-width="1"/></svg>
<div class="ab" style="left:937px;top:489px;width:4px;height:1px;background:repeating-linear-gradient(to right,#777 0,#777 1px,transparent 1px,transparent 2px)"></div>
<svg class="ab" style="left:943px;top:482px" width="16" height="16" viewBox="0 0 16 16"><path d="M8.3,0.5 L12.8,0.5 L15.5,3.4 L15.5,15.5 L12.3,15.5 L12.3,12 L9.8,12.6 L6.2,12.6 L3.4,10 L3.4,8 L5,3.9 Z" fill="url(#gs)" stroke="#111" stroke-width="1"/><path d="M0.6,1 L1.6,2.6 L2.6,1 L3.4,3 L4.8,4.8 L3.6,6.2 L2.4,6.6 L0.6,5.6 Z" fill="#ee1111" stroke="#111" stroke-width="0.9"/><path d="M4.2,5.2 L6.5,6" stroke="#8a8a8a" stroke-width="1"/></svg>
<div class="ab" style="left:948px;top:168px;width:1px;height:48px;background:repeating-linear-gradient(to bottom,#777 0,#777 1px,transparent 1px,transparent 2px)"></div>
<div class="ab" style="left:948px;top:246px;width:1px;height:48px;background:repeating-linear-gradient(to bottom,#777 0,#777 1px,transparent 1px,transparent 2px)"></div>
<div class="ab" style="left:948px;top:324px;width:1px;height:48px;background:repeating-linear-gradient(to bottom,#777 0,#777 1px,transparent 1px,transparent 2px)"></div>
<div class="ab" style="left:948px;top:421px;width:1px;height:29px;background:repeating-linear-gradient(to bottom,#777 0,#777 1px,transparent 1px,transparent 2px)"></div>
<div class="t b" style="left:935px;top:534.0px;"><a style="color:#9999ff;">tdm » dswp.de:22222</a></div>
<div class="t" style="left:935px;top:557.0px;">status: <span style="color:#228833">online</span></div>
<div class="t" style="left:935px;top:580.0px;">players: 21/45</div>
<div class="t" style="left:935px;top:603.0px;">map: ut4_kingdom</div>
<div class="t b" style="left:935px;top:653.0px;"><a style="color:#22ccff;">bomb » dswp.de:22223</a></div>
<div class="t" style="left:935px;top:676.0px;">status: <span style="color:#228833">online</span></div>
<div class="t" style="left:935px;top:699.0px;">players: 0/12</div>
<div class="t" style="left:935px;top:722.0px;">map: ut4_dicks</div>
<div class="t b" style="left:935px;top:772.0px;"><a style="color:#22ccff;">jump » dswp.de:22224</a></div>
<div class="t" style="left:935px;top:795.0px;">status: <span style="color:#228833">online</span></div>
<div class="t" style="left:935px;top:818.0px;">players: 2/10</div>
<div class="t" style="left:935px;top:841.0px;">map: ut4_uberjumps_beta3</div>
</div>
</body></html>
